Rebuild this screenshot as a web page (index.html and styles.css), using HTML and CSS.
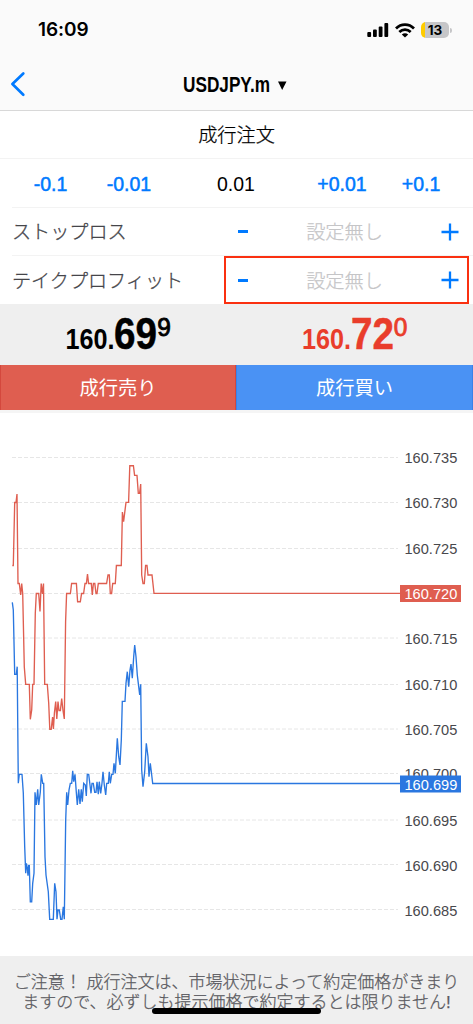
FILE: index.html
```html
<!DOCTYPE html>
<html lang="ja">
<head>
<meta charset="utf-8">
<title>USDJPY.m</title>
<link rel="stylesheet" href="styles.css">
</head>
<body>
<div class="screen">
  <header class="header">
    <div class="status">
      <span class="time">16:09</span>
      <div class="status-icons">
        <svg class="signal" width="22" height="14" viewBox="0 0 22 14"><rect x="0.3" y="9" width="3.8" height="5" rx="1"/><rect x="6" y="6.6" width="3.8" height="7.4" rx="1"/><rect x="11.7" y="3.4" width="3.8" height="10.6" rx="1"/><rect x="17.4" y="0" width="3.8" height="14" rx="1"/></svg>
        <svg class="wifi" width="20" height="15" viewBox="0 0 20 15"><g fill="none" stroke="#000" stroke-width="2.7"><path d="M1 5.5C6 .3 14 .3 19 5.5"/><path d="M4.3 9C7.6 5.8 12.4 5.8 15.7 9"/></g><path d="M10 14.5L6.8 11.4C8.6 9.8 11.4 9.8 13.2 11.4Z"/></svg>
        <div class="battery"><span>13</span></div>
        <i class="battery-tip"></i>
      </div>
    </div>
    <div class="nav">
      <svg class="back" width="16" height="26" viewBox="0 0 16 26"><path d="M13.3 2.5L2.4 13L13.3 23.7" fill="none" stroke="#007aff" stroke-width="2.7" stroke-linecap="round" stroke-linejoin="round"/></svg>
      <svg class="symbol" width="120" height="34" viewBox="0 0 120 34"><text x="1" y="23.5" textLength="87" lengthAdjust="spacingAndGlyphs">USDJPY.m</text><path d="M96 13.5H104.5L100.2 22Z"/></svg>
    </div>
  </header>

  <div class="row order-type">成行注文</div>
  <div class="row lots">
    <button>-0.1</button><button>-0.01</button><span>0.01</span><button>+0.01</button><button>+0.1</button>
  </div>
  <div class="row setting">
    <span class="label">ストップロス</span>
    <div class="stepper"><i class="minus"></i><span>設定無し</span><svg class="plus" width="18" height="18" viewBox="0 0 18 18"><path d="M9 .5V17.5M.5 9H17.5"/></svg></div>
  </div>
  <div class="row setting last">
    <span class="label">テイクプロフィット</span>
    <div class="stepper marked"><i class="minus"></i><span>設定無し</span><svg class="plus" width="18" height="18" viewBox="0 0 18 18"><path d="M9 .5V17.5M.5 9H17.5"/></svg></div>
  </div>

  <div class="prices">
    <svg width="236" height="61" viewBox="0 0 236 61"><text class="p-mid" x="65.5" y="44.8" textLength="49" lengthAdjust="spacingAndGlyphs">160.</text><text class="p-big" x="114" y="44.8" textLength="43" lengthAdjust="spacingAndGlyphs">69</text><text class="p-sup" x="157.2" y="31.8" textLength="13.6" lengthAdjust="spacingAndGlyphs">9</text></svg>
    <svg class="ask" width="237" height="61" viewBox="236 0 237 61"><text class="p-mid" x="302" y="44.8" textLength="49" lengthAdjust="spacingAndGlyphs">160.</text><text class="p-big" x="351" y="44.8" textLength="43" lengthAdjust="spacingAndGlyphs">72</text><text class="p-sup" x="393.8" y="31.8" textLength="13.6" lengthAdjust="spacingAndGlyphs">0</text></svg>
  </div>
  <div class="actions"><button class="sell">成行売り</button><button class="buy">成行買い</button></div>

  <svg class="chart" width="473" height="543" viewBox="0 413 473 543">
    <path class="grid" d="M12 457.5H398M12 502.5H398M12 548.5H398M12 593.5H398M12 638H398M12 684.5H398M12 729H398M12 773.5H398M12 820H398M12 864.5H398M12 909.5H398"/>
    <g class="axis">
      <text x="404.5" y="463">160.735</text><text x="404.5" y="508">160.730</text><text x="404.5" y="554">160.725</text><text x="404.5" y="644">160.715</text><text x="404.5" y="690">160.710</text><text x="404.5" y="735">160.705</text><text x="404.5" y="779">160.700</text><text x="404.5" y="826">160.695</text><text x="404.5" y="871">160.690</text><text x="404.5" y="916">160.685</text>
    </g>
    <polyline class="line ask-line" points="12.3,565.5 13.3,565.5 14.7,502.5 16,502.5 17,494 18,583.5 19.3,583.5 20.7,595 21.7,583.5 22.7,593.5 24.3,667 25.7,684.3 29.3,684.3 30.3,719.3 31.7,710 32.7,684.3 34,684.3 35.3,613 36.3,593.5 38.7,593.5 40,611.5 41.2,583.5 42.5,594 43.5,583.5 44.7,684.3 47.3,684.3 48.7,703 49.8,729.3 51.2,729.3 52.6,717 53.4,729 54.4,713 55.7,701.5 56.8,719 58,701.5 59,710.5 60.4,710.5 61.7,698.5 63,710.5 64.3,719 65.6,621.5 66.6,593.5 70.4,593.5 71.6,583.5 76.4,583.5 77.6,601.7 80.3,601.7 81.6,593.5 83.6,593.5 85,583.5 86.4,583.5 87.5,574 88.6,583.5 91.3,583.5 92.3,595 93.4,583.5 94.8,583.5 96,593.5 97,593.5 98.3,583.5 106.6,583.5 108,575 109.3,575 110.3,593.5 111.6,593.5 112.7,583.5 115.3,583.5 116.4,565.5 121.3,565.5 122.4,512 123.6,521.6 126,502.4 128.6,502.4 129.8,465.7 133.4,465.7 134.6,475.4 137,475.4 138.3,493.4 139.6,493.4 140.7,484 141.7,575 143,583.5 144.3,583.5 145.6,565.5 147,565.5 148,575 152,575 154,593.4 400,593.4"/>
    <polyline class="line bid-line" points="12.3,602.3 13.3,610 14.7,674.3 16.3,674.3 17.2,666.7 18.3,783.3 19.3,774.3 22,774.3 23.3,793 24.7,846.7 25.7,873.3 26.4,863.3 27.3,868 28,875.7 28.7,865.3 29.3,865.3 30.3,901.7 31.7,901.7 32.7,883.3 34,873.3 35,792.3 36.3,805 37.7,789.3 38.7,805 40.3,792.3 41.3,774.3 42.7,783.3 43.7,783.3 45,856.7 46,875 48.3,891.7 49.7,919.3 53.3,919.3 54.7,883.3 56,891.7 57,919.3 58,910 59.3,910 60.7,919.3 62,919.3 63.3,906.7 64.3,919.3 65.7,820 66.7,792.3 67.7,805 69,790 70.3,783.3 71.7,783.3 72.7,770.7 73.7,781.7 75,774.3 76.3,792.3 77.3,805 78.7,789.3 80,804 81.3,789.3 82.3,801.7 83.7,783.3 85.3,785 86.3,796 87.3,774.3 88.7,774.3 90,785 91,793.3 92,783.3 93.3,783.3 94.7,792.3 96,792.3 97,781.7 98.3,794.3 99.3,781.7 100.7,793.3 102,783.3 103,771.7 104.3,785 105.7,795 106.7,783.3 108.3,783.3 109.3,771.7 110.3,783.3 111.7,774.3 113,774.3 114,763.3 115.3,773.3 117.3,738.3 118.7,756.7 120,765 121.3,740 122.3,701.3 125,701.3 126,683.3 127.3,671.7 128.7,686.7 130,670 131,664 132.3,678.3 133.7,656.7 134.7,645 136,656.7 137.3,675 138.7,686.7 139.7,695 140.7,684.3 141.7,770 143,786.7 144.7,771.7 146.3,743.3 148,756.7 149,776.7 150.3,763.3 151.7,775 152.7,783.5 400,783.5"/>
    <rect x="400" y="585" width="61" height="17" fill="#df5e50"/>
    <rect x="400" y="775.5" width="61" height="17" fill="#2a77e0"/>
    <g class="axis tag"><text x="404.5" y="599">160.720</text><text x="404.5" y="789.5">160.699</text></g>
  </svg>

  <footer class="notice">
    <p>ご注意！ 成行注文は、市場状況によって約定価格がきまり</p>
    <p>ますので、必ずしも提示価格で約定するとは限りません!</p>
    <i class="home-bar"></i>
  </footer>
</div>
</body>
</html>
```
FILE: styles.css
```css
* { box-sizing: border-box; }
body {
  margin: 0;
  background: #fff;
  font-family: "Liberation Sans", "Noto Sans CJK JP", sans-serif;
  color: #000;
}
p { margin: 0; }
svg { display: block; flex: none; overflow: visible; }
button {
  border: 0;
  padding: 0;
  background: none;
  font: inherit;
  color: inherit;
}
.screen {
  width: 473px;
  height: 1024px;
  overflow: hidden;
  display: flex;
  flex-direction: column;
}
.header {
  flex: none;
  height: 111px;
  background: #fafafa;
  border-bottom: 1px solid #d8d8d8;
}
.status {
  height: 60px;
  padding: 0 21px 0 38px;
  display: flex;
  align-items: center;
  justify-content: space-between;
}
.time {
  font: 600 19px/24px Inter, sans-serif;
  letter-spacing: -0.1px;
}
.status-icons { display: flex; align-items: center; }
.wifi { margin: 0 6px 0 6px; }
.battery {
  width: 28px;
  height: 16px;
  border-radius: 5px;
  background: linear-gradient(90deg, #fc0 4px, #c6c6c8 4px);
  font: 700 13.5px/16px Inter, sans-serif;
  text-align: center;
}
.battery-tip {
  width: 2px;
  height: 5px;
  margin-left: 1px;
  border-radius: 0 2px 2px 0;
  background: #c6c6c8;
}
.nav {
  height: 50px;
  padding-left: 10px;
  display: flex;
  align-items: center;
}
.back { margin-top: -3px; }
.symbol { margin: -1px 0 0 156px; }
.symbol text { font-size: 22px; font-weight: 700; }
.row {
  flex: none;
  height: 48px;
  margin-left: 12px;
  border-bottom: 1px solid #f3f3f3;
  display: flex;
  align-items: center;
  font-weight: 300;
  font-size: 19.2px;
}
.order-type {
  margin-left: 0;
  padding-bottom: 2px;
  justify-content: center;
  -webkit-text-stroke: 0.25px #000;
}
.lots {
  height: 49px;
  padding-top: 2px;
  display: grid;
  grid-template-columns: 77px 80px 134px 78px 80px;
  font-weight: 400;
  font-size: 19.5px;
  text-align: center;
}
.lots button { color: #007aff; -webkit-text-stroke: 0.5px #007aff; }
.setting { justify-content: space-between; }
.setting.last { border-bottom: 0; }
.label {
  padding-bottom: 1px;
  color: #45454a;
  font-size: 19.1px;
  -webkit-text-stroke: 0.3px #45454a;
}
.stepper {
  width: 245px;
  height: 48px;
  margin-right: 4px;
  padding: 0 10px 0 14px;
  display: flex;
  align-items: center;
  justify-content: space-between;
  color: #c5c5c7;
}
.stepper span {
  margin: 0 48px;
  padding-bottom: 1px;
  -webkit-text-stroke: 0.25px #c5c5c7;
}
.marked { border: 2px solid #fa3010; padding: 0 8px 0 12px; }
.minus { width: 10px; height: 3px; background: #007aff; }
.plus path { stroke: #007aff; stroke-width: 2.3; }
.prices {
  flex: none;
  height: 61px;
  display: flex;
  background: #efefef;
}
.ask { fill: #e93d2b; }
.p-mid { font-size: 29px; font-weight: 700; }
.p-big { font-size: 44px; font-weight: 700; stroke: #000; stroke-width: 0.5px; }
.p-sup { font-size: 26px; font-weight: 400; stroke: #000; stroke-width: 0.9px; }
.ask .p-sup, .ask .p-big { stroke: #e93d2b; }
.actions {
  flex: none;
  height: 48px;
  display: flex;
  border-bottom: 3px solid #f5f5f5;
  color: #fff;
  font-size: 19.3px;
}
.sell, .buy { padding-bottom: 1px; }
.sell { width: 236px; background: #df5e50; border: solid #d4483d; border-width: 0 1px; }
.buy { width: 237px; background: #4a92f4; border: solid #3982e8; border-width: 0 1px; }
.chart { background: #fff; }
.grid { stroke: #e6e6e6; stroke-width: 1; stroke-dasharray: 4 2; }
.axis { font-size: 14.6px; fill: #48484c; }
.tag { fill: #fff; }
.line { fill: none; stroke-width: 1.35; stroke-linejoin: miter; }
.ask-line { stroke: #df5e50; }
.bid-line { stroke: #2a77e0; }
.notice {
  position: relative;
  flex: none;
  height: 68px;
  padding-top: 17px;
  background: #efefef;
  color: #5a5a60;
  font-size: 17px;
  font-weight: 300;
  line-height: 20px;
  text-align: center;
  white-space: nowrap;
  -webkit-text-stroke: 0.25px #5a5a60;
}
.home-bar {
  position: absolute;
  left: 152px;
  top: 52px;
  width: 169px;
  height: 6px;
  border-radius: 3px;
  background: #000;
}
```
